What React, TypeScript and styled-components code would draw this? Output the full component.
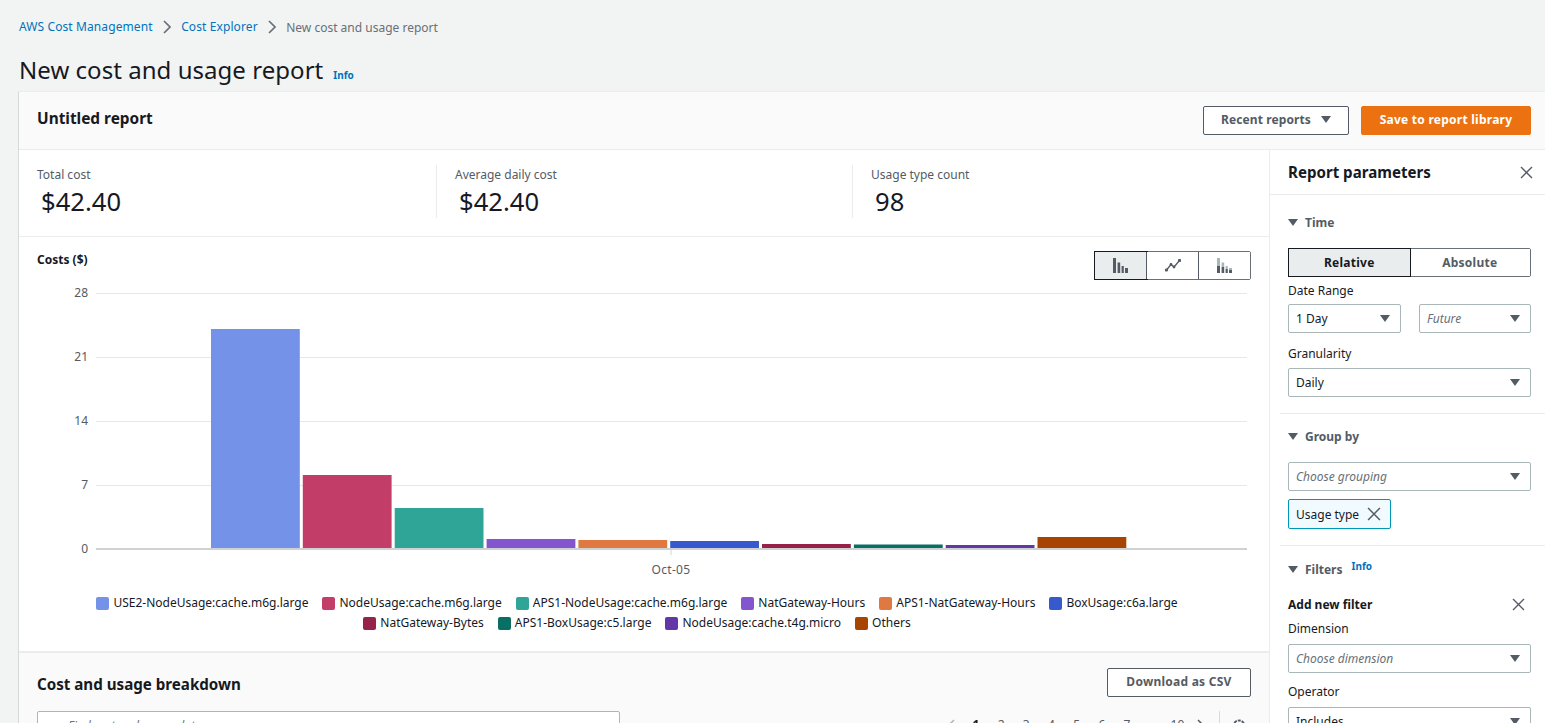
import React from "react";
import styled, { createGlobalStyle } from "styled-components";

const Global = createGlobalStyle`
  html, body { margin: 0; padding: 0; height: 100%; overflow: hidden; background: #f2f3f3; }
  body { font-family: "Noto Sans", "Open Sans", sans-serif; color: #16191f; font-size: 12px; }
  * { box-sizing: border-box; }
`;

const Page = styled.div`
  height: 723px;
  overflow: hidden;
  padding-left: 18px;
`;
const Breadcrumbs = styled.nav`
  display: flex;
  align-items: center;
  height: 53px;
  padding-left: 1px;
  font-size: 12px;
`;
const Crumb = styled.a`
  color: #0073bb;
  text-decoration: none;
  letter-spacing: 0.1px;
`;
const CrumbCurrent = styled.span`
  color: #687078;
  margin-top: 1px;
`;
const CrumbSep = styled.svg`
  width: 8px;
  height: 14px;
  margin: 1px 10.5px 0 10px;
  fill: none;
  stroke: #687078;
  stroke-width: 1.7;
`;
const TitleRow = styled.div`
  display: flex;
  align-items: baseline;
  height: 38px;
  padding-left: 1px;
`;
const Title = styled.h1`
  margin: 0;
  font-size: 24px;
  line-height: 33px;
  font-weight: 400;
  letter-spacing: 0.04px;
`;
const InfoLink = styled.a`
  color: #0073bb;
  font-size: 10px;
  font-weight: 700;
  margin-left: 10px;
`;
const Card = styled.div`
  background: #fff;
  border-left: 1px solid #d5dbdb;
  border-top: 1px solid #eaeded;
  height: 632px;
`;
const CardHeader = styled.header`
  height: 58px;
  background: #fafafa;
  border-bottom: 1px solid #eaeded;
  display: flex;
  align-items: center;
  padding: 0 14px 0 18px;
`;
const CardTitle = styled.h2`
  margin: 0 0 4px;
  font-size: 15.4px;
  font-weight: 700;
  flex: 1;
`;
const Button = styled.button<{ $primary?: boolean }>`
  height: 29px;
  padding: 0 0 2px;
  border-radius: 2px;
  font: 700 12px "Noto Sans", sans-serif;
  letter-spacing: 0.25px;
  display: flex;
  align-items: center;
  justify-content: center;
  gap: 9px;
  border: 1px solid ${(p) => (p.$primary ? "#ec7211" : "#545b64")};
  background: ${(p) => (p.$primary ? "#ec7211" : "#fff")};
  color: ${(p) => (p.$primary ? "#fff" : "#545b64")};
`;
const RecentButton = styled(Button)`
  width: 146px;
  margin-right: 12px;
  letter-spacing: 0.1px;
  gap: 10px;
`;
const SaveButton = styled(Button)`
  width: 170px;
`;
const Columns = styled.div`
  display: flex;
  height: 573px;
`;
const Main = styled.main`
  width: 1250px;
  flex: none;
  display: flex;
  flex-direction: column;
`;
const KpiRow = styled.section`
  flex: none;
  height: 87px;
  display: flex;
  padding-top: 15px;
  border-bottom: 1px solid #eaeded;
`;
const Kpi = styled.div<{ $w: number }>`
  width: ${(p) => p.$w}px;
  height: 53px;
  padding: 1px 0 0 18px;
  border-right: 1px solid #eaeded;
  &:last-child { border-right: none; }
`;
const KpiLabel = styled.div`
  color: #545b64;
  font-size: 12px;
  line-height: 18px;
`;
const KpiValue = styled.div`
  font-size: 25.6px;
  line-height: 33px;
  padding-left: 4px;
  margin-top: 1px;
`;
const ChartSection = styled.section`
  flex: none;
  height: 416px;
  border-bottom: 2px solid #eaeded;
`;
const ChartHead = styled.div`
  height: 43px;
  display: flex;
  padding: 14px 18px 0 18px;
  justify-content: space-between;
`;
const ChartTitle = styled.div`
  font-weight: 700;
  font-size: 12px;
  line-height: 18px;
`;
const ChartToggle = styled.div`
  display: flex;
  width: 157px;
  height: 29px;
  border: 1px solid #687078;
  border-radius: 2px;
  background: #fff;
`;
const ToggleIcon = styled.div<{ $on?: boolean }>`
  flex: 1;
  display: flex;
  align-items: center;
  justify-content: center;
  background: ${(p) => (p.$on ? "#eaeded" : "#fff")};
  outline: ${(p) => (p.$on ? "1px solid #16191f" : "none")};
  border-right: 1px solid #545b64;
  &:last-child { border-right: none; }
`;
const ChartSvg = styled.svg`
  display: block;
  width: 1249px;
  height: 300px;
  font-family: "Noto Sans", sans-serif;
  font-size: 12px;
`;
const AxisLabel = styled.text`
  fill: #545b64;
`;
const Legend = styled.div`
  display: flex;
  flex-wrap: wrap;
  justify-content: center;
  padding: 14px 74px 0 60px;
  row-gap: 2px;
  column-gap: 14px;
`;
const LegendItem = styled.div`
  display: flex;
  align-items: center;
  gap: 4px;
  line-height: 18px;
  color: #16191f;
`;
const Swatch = styled.span<{ $c: string }>`
  width: 13px;
  height: 13px;
  border-radius: 2px;
  background: ${(p) => p.$c};
`;
const Breakdown = styled.section`
  flex: none;
  height: 70px;
  background: #fafafa;
  padding: 15px 18px 0 18px;
`;
const BreakdownHead = styled.div`
  display: flex;
  justify-content: space-between;
  height: 43px;
`;
const BreakdownTitle = styled.h2`
  margin: 4px 0 0;
  font-size: 15.15px;
  line-height: 24px;
  font-weight: 700;
`;
const CsvButton = styled(Button)`
  width: 144px;
`;
const TableTools = styled.div`
  display: flex;
  align-items: flex-start;
`;
const Search = styled.div`
  width: 583px;
  height: 29px;
  background: #fff;
  border: 1px solid #aab7b8;
  border-radius: 2px;
  padding: 5px 0 0 30px;
  font-style: italic;
  color: #687078;
`;
const Pager = styled.div`
  margin-left: auto;
  display: flex;
  align-items: center;
  height: 29px;
  padding-right: 4px;
  color: #545b64;
`;
const PageNo = styled.span<{ $on?: boolean }>`
  width: 25.2px;
  margin-top: -2px;
  text-align: center;
  font-weight: ${(p) => (p.$on ? 700 : 400)};
  color: ${(p) => (p.$on ? "#16191f" : "#545b64")};
`;
const PagerChevron = styled.svg<{ $off?: boolean }>`
  width: 8px;
  height: 14px;
  fill: none;
  stroke: ${(p) => (p.$off ? "#aab7b8" : "#545b64")};
  stroke-width: 1.5;
  margin: ${(p) => (p.$off ? "0 8px 0 0" : "0 0 0 7px")};
`;
const PagerDivider = styled.span`
  width: 1px;
  height: 29px;
  background: #d5dbdb;
  margin: 0 11px 0 14px;
`;
const Panel = styled.aside`
  flex: 1;
  border-left: 1px solid #eaeded;
`;
const PanelHead = styled.div`
  height: 45px;
  border-bottom: 1px solid #eaeded;
  display: flex;
  align-items: center;
  justify-content: space-between;
  padding: 0 12px 0 18px;
`;
const PanelTitle = styled.h3`
  margin: 0;
  font-size: 15.1px;
  font-weight: 700;
`;
const PanelGroup = styled.div<{ $h: number; $top: number }>`
  height: ${(p) => p.$h}px;
  padding: ${(p) => p.$top}px 14px 0 18px;
  overflow: hidden;
`;
const Rule = styled.hr`
  border: none;
  border-top: 1px solid #eaeded;
  margin: 0 0 0 10px;
`;
const GroupHead = styled.div`
  display: flex;
  align-items: center;
  height: 18px;
  font-weight: 700;
  color: #545b64;
  gap: 7px;
`;
const FieldLabel = styled.div<{ $gap: number }>`
  font-size: 12px;
  line-height: 18px;
  color: #16191f;
  margin-top: ${(p) => p.$gap}px;
`;
const SegToggle = styled.div`
  display: flex;
  height: 29px;
  margin-top: 17px;
  border: 1px solid #687078;
  border-radius: 2px;
`;
const Seg = styled.div<{ $on?: boolean }>`
  flex: 1;
  position: relative;
  z-index: ${(p) => (p.$on ? 1 : 0)};
  display: flex;
  align-items: center;
  justify-content: center;
  font-weight: 700;
  letter-spacing: 0.25px;
  background: ${(p) => (p.$on ? "#eaeded" : "#fff")};
  color: ${(p) => (p.$on ? "#16191f" : "#545b64")};
  outline: ${(p) => (p.$on ? "1px solid #16191f" : "none")};
`;
const Select = styled.div<{ $placeholder?: boolean; $w?: number; $gap?: number }>`
  height: 29px;
  width: ${(p) => (p.$w ? `${p.$w}px` : "100%")};
  margin-top: ${(p) => p.$gap ?? 0}px;
  flex: none;
  display: flex;
  align-items: center;
  justify-content: space-between;
  padding: 0 10px 0 7px;
  border: 1px solid #aab7b8;
  border-radius: 2px;
  background: #fff;
  color: ${(p) => (p.$placeholder ? "#687078" : "#16191f")};
  font-style: ${(p) => (p.$placeholder ? "italic" : "normal")};
`;
const SelectRow = styled.div`
  display: flex;
  justify-content: space-between;
  margin-top: 4px;
`;
const Token = styled.div`
  display: inline-flex;
  align-items: center;
  gap: 8px;
  width: 103px;
  height: 30px;
  padding-left: 7px;
  margin-top: 8px;
  background: #f1faff;
  border: 1px solid #0096b8;
  border-radius: 2px;
`;
const FilterHead = styled.div`
  display: flex;
  align-items: center;
  justify-content: space-between;
  font-weight: 700;
  padding-right: 6px;
  height: 18px;
  margin-top: 17px;
`;
const SmallInfo = styled.a`
  color: #0073bb;
  font-size: 10px;
  font-weight: 700;
  align-self: flex-start;
  margin: -1px 0 0 2px;
`;

const Caret = ({ c = "#545b64" }: { c?: string }) => (
  <svg width="10" height="7" viewBox="0 0 10 7">
    <path d="M0 0h10L5 7z" fill={c} />
  </svg>
);
const Sep = () => (
  <CrumbSep viewBox="0 0 8 14">
    <path d="M1 1l6 6-6 6" />
  </CrumbSep>
);
const Close = ({ size = 13, c = "#545b64" }: { size?: number; c?: string }) => (
  <svg width={size} height={size} viewBox="0 0 13 13" fill="none" stroke={c} strokeWidth="1.4">
    <path d="M1 1l11 11M12 1L1 12" />
  </svg>
);

const bars = [
  { x: 192, top: 329, c: "#7492e7", n: "USE2-NodeUsage:cache.m6g.large" },
  { x: 283.8, top: 475, c: "#c33d69", n: "NodeUsage:cache.m6g.large" },
  { x: 375.7, top: 508, c: "#2ea597", n: "APS1-NodeUsage:cache.m6g.large" },
  { x: 467.6, top: 539, c: "#8456ce", n: "NatGateway-Hours" },
  { x: 559.4, top: 540, c: "#e07941", n: "APS1-NatGateway-Hours" },
  { x: 651.2, top: 541, c: "#3759ce", n: "BoxUsage:c6a.large" },
  { x: 743, top: 544, c: "#962249", n: "NatGateway-Bytes" },
  { x: 834.9, top: 544.5, c: "#096f64", n: "APS1-BoxUsage:c5.large" },
  { x: 926.7, top: 545, c: "#6237a7", n: "NodeUsage:cache.t4g.micro" },
  { x: 1018.5, top: 537, c: "#a84401", n: "Others" },
];
const grid = [
  { y: 293, t: "28" },
  { y: 357, t: "21" },
  { y: 421, t: "14" },
  { y: 485, t: "7" },
];
const Y0 = 280;

export default function App() {
  return (
    <Page>
      <Global />
      <Breadcrumbs>
        <Crumb>AWS Cost Management</Crumb>
        <Sep />
        <Crumb>Cost Explorer</Crumb>
        <Sep />
        <CrumbCurrent>New cost and usage report</CrumbCurrent>
      </Breadcrumbs>
      <TitleRow>
        <Title>New cost and usage report</Title>
        <InfoLink>Info</InfoLink>
      </TitleRow>
      <Card>
        <CardHeader>
          <CardTitle>Untitled report</CardTitle>
          <RecentButton>
            Recent reports <Caret />
          </RecentButton>
          <SaveButton $primary>Save to report library</SaveButton>
        </CardHeader>
        <Columns>
          <Main>
            <KpiRow>
              <Kpi $w={418}>
                <KpiLabel>Total cost</KpiLabel>
                <KpiValue>$42.40</KpiValue>
              </Kpi>
              <Kpi $w={416}>
                <KpiLabel>Average daily cost</KpiLabel>
                <KpiValue>$42.40</KpiValue>
              </Kpi>
              <Kpi $w={416}>
                <KpiLabel>Usage type count</KpiLabel>
                <KpiValue>98</KpiValue>
              </Kpi>
            </KpiRow>
            <ChartSection>
              <ChartHead>
                <ChartTitle>Costs ($)</ChartTitle>
                <ChartToggle>
                  <ToggleIcon $on>
                    <svg width="15" height="15" viewBox="0 0 15 15" fill="#545b64">
                      <path d="M0 0h3v15H0zM4.6 4.5h2.6V15H4.6zM8.6 8h2.2v7H8.6zM12 10h3v5h-3z" />
                    </svg>
                  </ToggleIcon>
                  <ToggleIcon>
                    <svg width="16" height="13" viewBox="0 0 16 13" fill="none" stroke="#545b64" strokeWidth="1.3">
                      <path d="M1.5 11L6 5.5l3 2.5 5.5-6.5" />
                      <g fill="#545b64" stroke="none">
                        <circle cx="1.5" cy="11" r="1.6" />
                        <circle cx="6" cy="5.5" r="1.4" />
                        <circle cx="9" cy="8" r="1.4" />
                        <circle cx="14.5" cy="1.5" r="1.6" />
                      </g>
                    </svg>
                  </ToggleIcon>
                  <ToggleIcon>
                    <svg width="15" height="15" viewBox="0 0 15 15">
                      <path d="M0 0h3v8H0zM4.6 4.5h2.6V9H4.6zM8.6 8h2.2v3H8.6zM12 10h3v2h-3z" fill="#aab7b8" />
                      <path d="M0 8h3v7H0zM4.6 9h2.6v6H4.6zM8.6 11h2.2v4H8.6zM12 12h3v3h-3z" fill="#545b64" />
                    </svg>
                  </ToggleIcon>
                </ChartToggle>
              </ChartHead>
              <ChartSvg viewBox={`0 ${Y0} 1249 300`}>
                {grid.map((g) => (
                  <g key={g.t}>
                    <line x1="77" x2="1228" y1={g.y + 0.5} y2={g.y + 0.5} stroke="#e4e8e8" />
                    <AxisLabel x="69" y={g.y + 4} textAnchor="end">
                      {g.t}
                    </AxisLabel>
                  </g>
                ))}
                <line x1="652" x2="652" y1={549} y2={555} stroke="#cfd4d4" />
                <rect x="77" y="548" width="1151" height="2" fill="#cfd2d2" />
                {bars.map((b) => (
                  <rect key={b.n} x={b.x} y={b.top} width="88.8" height={548 - b.top} fill={b.c} />
                ))}
                <AxisLabel x="69" y="553" textAnchor="end">
                  0
                </AxisLabel>
                <AxisLabel x="652" y="573.5" textAnchor="middle" letterSpacing="0.3">
                  Oct-05
                </AxisLabel>
              </ChartSvg>
              <Legend>
                {bars.map((b) => (
                  <LegendItem key={b.n}>
                    <Swatch $c={b.c} />
                    {b.n}
                  </LegendItem>
                ))}
              </Legend>
            </ChartSection>
            <Breakdown>
              <BreakdownHead>
                <BreakdownTitle>Cost and usage breakdown</BreakdownTitle>
                <CsvButton>Download as CSV</CsvButton>
              </BreakdownHead>
              <TableTools>
                <Search>Find cost and usage data</Search>
                <Pager>
                  <PagerChevron $off viewBox="0 0 8 14">
                    <path d="M7 1L1 7l6 6" />
                  </PagerChevron>
                  <PageNo $on>1</PageNo>
                  <PageNo>2</PageNo>
                  <PageNo>3</PageNo>
                  <PageNo>4</PageNo>
                  <PageNo>5</PageNo>
                  <PageNo>6</PageNo>
                  <PageNo>7</PageNo>
                  <PageNo>...</PageNo>
                  <PageNo>10</PageNo>
                  <PagerChevron viewBox="0 0 8 14">
                    <path d="M1 1l6 6-6 6" />
                  </PagerChevron>
                  <PagerDivider />
                  <svg width="16" height="16" viewBox="0 0 16 16" fill="none" stroke="#545b64" strokeWidth="2">
                    <circle cx="8" cy="8" r="5.5" strokeDasharray="3 1" />
                    <circle cx="8" cy="8" r="2" strokeWidth="1.5" />
                  </svg>
                </Pager>
              </TableTools>
            </Breakdown>
          </Main>
          <Panel>
            <PanelHead>
              <PanelTitle>Report parameters</PanelTitle>
              <Close />
            </PanelHead>
            <PanelGroup $h={218} $top={18}>
              <GroupHead>
                <Caret /> Time
              </GroupHead>
              <SegToggle>
                <Seg $on>Relative</Seg>
                <Seg>Absolute</Seg>
              </SegToggle>
              <FieldLabel $gap={5}>Date Range</FieldLabel>
              <SelectRow>
                <Select $w={113}>
                  1 Day <Caret />
                </Select>
                <Select $w={112} $placeholder>
                  Future <Caret />
                </Select>
              </SelectRow>
              <FieldLabel $gap={12}>Granularity</FieldLabel>
              <Select $gap={5}>
                Daily <Caret />
              </Select>
            </PanelGroup>
            <Rule />
            <PanelGroup $h={131} $top={13}>
              <GroupHead>
                <Caret /> Group by
              </GroupHead>
              <Select $placeholder $gap={17}>
                Choose grouping <Caret />
              </Select>
              <Token>
                Usage type <Close size={14} />
              </Token>
            </PanelGroup>
            <Rule />
            <PanelGroup $h={177} $top={14}>
              <GroupHead>
                <Caret /> Filters <SmallInfo>Info</SmallInfo>
              </GroupHead>
              <FilterHead>
                Add new filter <Close />
              </FilterHead>
              <FieldLabel $gap={7}>Dimension</FieldLabel>
              <Select $placeholder $gap={6}>
                Choose dimension <Caret />
              </Select>
              <FieldLabel $gap={10}>Operator</FieldLabel>
              <Select $gap={6}>
                Includes <Caret />
              </Select>
            </PanelGroup>
          </Panel>
        </Columns>
      </Card>
    </Page>
  );
}
